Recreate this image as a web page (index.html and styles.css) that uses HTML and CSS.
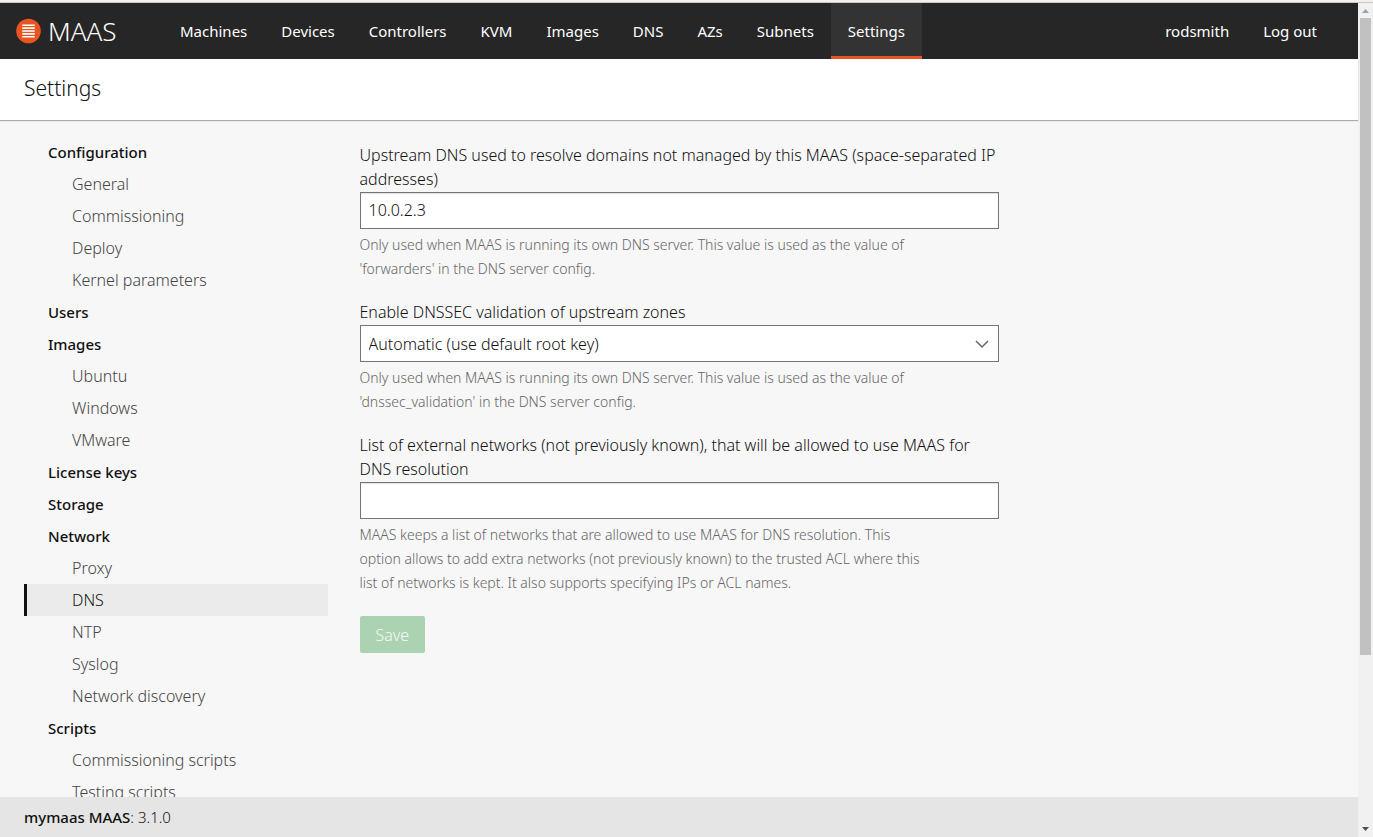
FILE: index.html
```html
<!DOCTYPE html>
<html lang="en">
<head>
<meta charset="utf-8">
<title>DNS | Settings | mymaas MAAS</title>
<link rel="stylesheet" href="styles.css">
</head>
<body>
<div class="app">
  <header class="header">
    <a class="logo" href="#">
      <svg class="logo-mark" viewBox="0 0 26 26" aria-hidden="true"><circle cx="13" cy="13" r="12.8" fill="#e95420"/><path d="M6.500 7h13M6.500 10h13M6.500 13h13M6.500 16h13M6.500 19h13" stroke="#fff" stroke-width="1.600"/></svg>
      <span class="logo-text">MAAS</span>
    </a>
    <nav class="nav" aria-label="Main">
      <a class="nav-link" href="#">Machines</a>
      <a class="nav-link" href="#">Devices</a>
      <a class="nav-link" href="#">Controllers</a>
      <a class="nav-link" href="#">KVM</a>
      <a class="nav-link" href="#">Images</a>
      <a class="nav-link" href="#">DNS</a>
      <a class="nav-link" href="#">AZs</a>
      <a class="nav-link" href="#">Subnets</a>
      <a class="nav-link is-active" href="#" aria-current="page">Settings</a>
    </nav>
    <nav class="nav nav-user" aria-label="Account">
      <a class="nav-link" href="#">rodsmith</a>
      <a class="nav-link" href="#">Log out</a>
    </nav>
  </header>
  <div class="title-bar"><h1 class="title">Settings</h1></div>
  <main class="main">
    <nav class="side" aria-label="Settings">
      <a class="side-link is-section" href="#">Configuration</a>
      <a class="side-link" href="#">General</a>
      <a class="side-link" href="#">Commissioning</a>
      <a class="side-link" href="#">Deploy</a>
      <a class="side-link" href="#">Kernel parameters</a>
      <a class="side-link is-section" href="#">Users</a>
      <a class="side-link is-section" href="#">Images</a>
      <a class="side-link" href="#">Ubuntu</a>
      <a class="side-link" href="#">Windows</a>
      <a class="side-link" href="#">VMware</a>
      <a class="side-link is-section" href="#">License keys</a>
      <a class="side-link is-section" href="#">Storage</a>
      <a class="side-link is-section" href="#">Network</a>
      <a class="side-link" href="#">Proxy</a>
      <a class="side-link is-current" href="#" aria-current="page">DNS</a>
      <a class="side-link" href="#">NTP</a>
      <a class="side-link" href="#">Syslog</a>
      <a class="side-link" href="#">Network discovery</a>
      <a class="side-link is-section" href="#">Scripts</a>
      <a class="side-link" href="#">Commissioning scripts</a>
      <a class="side-link" href="#">Testing scripts</a>
    </nav>
    <form class="form">
      <div class="field">
        <label class="label" for="upstream">Upstream DNS used to resolve domains not managed by this MAAS (space-separated IP addresses)</label>
        <input class="control" id="upstream" type="text" value="10.0.2.3">
        <p class="help">Only used when MAAS is running its own DNS server. This value is used as the value of 'forwarders' in the DNS server config.</p>
      </div>
      <div class="field">
        <label class="label" for="dnssec">Enable DNSSEC validation of upstream zones</label>
        <div class="select-wrap">
          <select class="control" id="dnssec"><option>Automatic (use default root key)</option></select>
          <svg class="chevron" viewBox="0 0 16 16" aria-hidden="true"><path d="M2 5l6 6 6-6" fill="none" stroke="#666" stroke-width="1.500"/></svg>
        </div>
        <p class="help">Only used when MAAS is running its own DNS server. This value is used as the value of 'dnssec_validation' in the DNS server config.</p>
      </div>
      <div class="field">
        <label class="label" for="networks">List of external networks (not previously known), that will be allowed to use MAAS for DNS resolution</label>
        <input class="control" id="networks" type="text">
        <p class="help">MAAS keeps a list of networks that are allowed to use MAAS for DNS resolution. This option allows to add extra networks (not previously known) to the trusted ACL where this list of networks is kept. It also supports specifying IPs or ACL names.</p>
      </div>
      <div class="actions"><button class="save" type="submit" disabled>Save</button></div>
    </form>
  </main>
  <footer class="footer"><strong class="footer-name">mymaas MAAS</strong>: 3.1.0</footer>
</div>
<div class="scrollbar" aria-hidden="true">
  <svg class="arrow" viewBox="0 0 15 15"><path d="M4 10h7L7.500 6z" fill="#a3a3a3"/></svg>
  <div class="track"><div class="thumb"></div></div>
  <svg class="arrow" viewBox="0 0 15 15"><path d="M4 5h7L7.500 9z" fill="#505050"/></svg>
</div>
</body>
</html>
```
FILE: styles.css
```css
* { box-sizing: border-box; }

body {
  margin: 0;
  height: 100vh;
  display: flex;
  overflow: hidden;
  border-top: 2px solid #f2f1f0;
  background: #f7f7f7;
  color: #111;
  font-family: "Noto Sans", sans-serif;
  font-size: 16px;
  line-height: 24px;
}

a { color: inherit; text-decoration: none; }

.app {
  flex: 1;
  min-width: 0;
  display: flex;
  flex-direction: column;
  border-top: 1px solid #cdc5bf;
}

.header {
  flex: none;
  display: flex;
  height: 56px;
  padding-right: 24px;
  background: #262626;
  color: #fff;
}

.logo {
  display: flex;
  align-items: center;
  gap: 7px;
  width: 163px;
  padding-left: 16px;
}
.logo-mark { width: 25px; height: 26px; }
.logo-text { font-size: 26px; font-weight: 300; }

.nav { display: flex; }
.nav-user { margin-left: auto; }
.nav-link { padding: 16px 17px; font-size: 15px; }
.nav-link.is-active {
  background: #333;
  border-bottom: 3px solid #e95420;
}

.title-bar {
  flex: none;
  position: relative;
  padding: 13px 24px 16px;
  background: #fff;
  box-shadow: 0 1px 1px rgba(0, 0, 0, .3);
}
.title { margin: 0; font-size: 21px; line-height: 32px; font-weight: 300; }

.main {
  flex: 1;
  min-height: 0;
  overflow: hidden;
  display: grid;
  grid-template-columns: repeat(12, 1fr);
  column-gap: 32px;
  padding: 16px 24px 0;
}

.side { grid-column: span 3; }
.side-link {
  display: block;
  padding: 4px 0 4px 48px;
  color: #444;
  font-weight: 300;
}
.side-link.is-section {
  padding-left: 24px;
  color: #111;
  font-size: 15px;
  font-weight: 500;
}
.side-link.is-current {
  padding-left: 45px;
  border-left: 3px solid #111;
  background: #ebebeb;
  color: #111;
}

.form { grid-column: span 6; padding-top: 7px; font-weight: 300; }
.field { margin-bottom: 19px; }
.label { display: block; margin-bottom: 1px; }
.control {
  display: block;
  width: 100%;
  height: 37px;
  padding: 0 8px;
  border: 1px solid #757575;
  border-radius: 0;
  background: #fff;
  color: #111;
  font: inherit;
  appearance: none;
}
input.control {
  padding-bottom: 2px;
  box-shadow: inset 0 1px 1px rgba(0, 0, 0, .12);
}
.select-wrap { position: relative; }
.chevron {
  position: absolute;
  top: 11px;
  right: 9px;
  width: 16px;
  height: 16px;
  pointer-events: none;
}
.help {
  max-width: 570px;
  margin: 4px 0 0;
  color: #666;
  font-size: 14px;
}
.actions { padding-top: 2px; }
.save {
  height: 37px;
  padding: 0 16px;
  border: 0;
  border-radius: 2px;
  background: #abd3b1;
  color: #f5faf6;
  font: inherit;
}

.footer {
  flex: none;
  padding: 8px 24px;
  background: #e5e5e5;
  font-size: 15px;
  font-weight: 300;
}
.footer-name { font-weight: 500; }

.scrollbar {
  flex: none;
  display: flex;
  flex-direction: column;
  width: 15px;
  border-top: 1px solid #cdc5bf;
  background: #f1f1f1;
}
.arrow { flex: none; width: 15px; height: 15px; }
.track { flex: 1; padding: 0 2px; }
.thumb { height: 79.2%; background: #c1c1c1; }
```
